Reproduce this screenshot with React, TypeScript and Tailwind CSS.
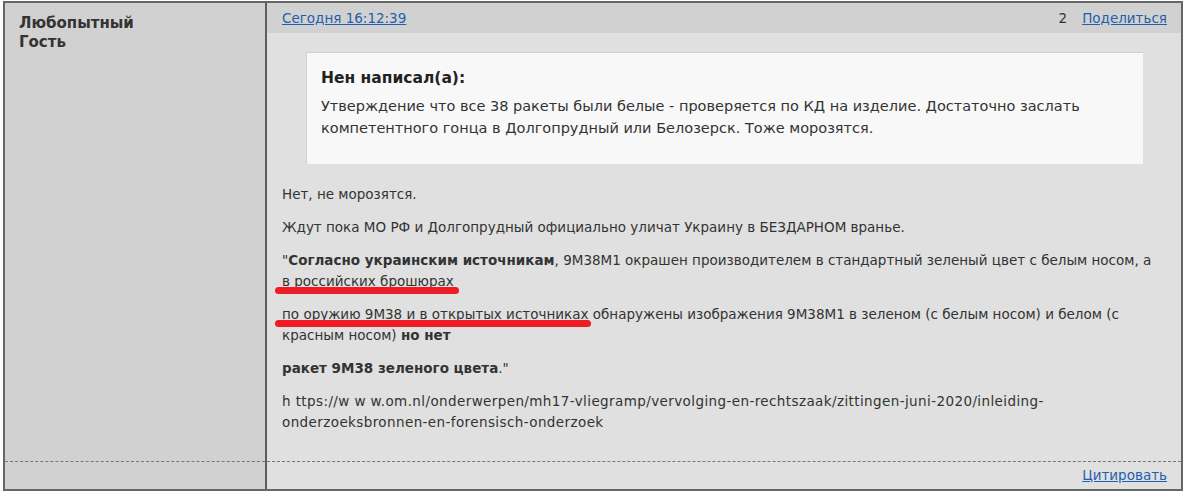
import React from "react";

function Mark({ children, left, right }: { children: React.ReactNode; left: number; right: number }) {
  return (
    <span className="relative whitespace-nowrap">
      {children}
      <span
        className="absolute top-[14px] h-[7px] rounded-full bg-[#ee1c25]"
        style={{ left: -left, right: -right }}
      />
    </span>
  );
}

export default function App() {
  return (
    <div className="ml-[3px] mt-px w-[1180px] h-[490px] border-2 border-[#666666] grid grid-cols-[262px_1fr] grid-rows-[1fr_28px] font-['DejaVu_Sans',Verdana,sans-serif] text-[13.5px] text-[#333333]">
      {/* left column */}
      <div className="bg-[#d1d1d1] border-r-2 border-[#5e5e5e] pl-[14px] pt-[11px]">
        <div className="font-bold text-[15px] leading-[19px] text-[#333333]">Любопытный</div>
        <div className="font-bold text-[15px] leading-[19px] text-[#333333]">Гость</div>
      </div>
      {/* right column */}
      <div className="bg-[#dfe0df] flex flex-col">
        <div className="h-[30px] bg-[#d1d1d1] flex items-center justify-between pl-[15px] pr-[14px]">
          <a href="#" className="text-[#1f5fae] underline">Сегодня 16:12:39</a>
          <div className="flex items-center gap-[15px]">
            <span>2</span>
            <a href="#" className="text-[#1f5fae] underline">Поделиться</a>
          </div>
        </div>
        <div className="pl-[15px] pr-[14px] pt-[19px]">
          <div className="mx-[24px] bg-[#f8f8f8] border-t border-l border-[#cfcfcf] pl-[14px] pr-[14px] pt-[15px] pb-[25px]">
            <div className="font-bold text-[15.5px] leading-[20px] text-[#222222]">Нен написал(а):</div>
            <div className="mt-[7px] text-[14.5px] leading-[22px]">
              Утверждение что все 38 ракеты были белые - проверяется по КД на изделие. Достаточно заслать
              <br />
              компетентного гонца в Долгопрудный или Белозерск. Тоже морозятся.
            </div>
          </div>
          <div className="mt-[20px] leading-[21px] flex flex-col gap-[12px]">
            <p>Нет, не морозятся.</p>
            <p>Ждут пока МО РФ и Долгопрудный официально уличат Украину в БЕЗДАРНОМ вранье.</p>
            <p>
              "<b>Согласно украинским источникам</b>, 9М38М1 окрашен производителем в стандартный зеленый цвет с белым носом, а
              <br />
              <Mark left={7} right={5}>в российских брошюрах</Mark>
            </p>
            <p>
              <Mark left={7} right={3}>по оружию 9М38 и в открытых источниках</Mark> обнаружены изображения 9М38М1 в зеленом (с белым носом) и белом (с
              <br />
              красным носом) <b>но нет</b>
            </p>
            <p>
              <b>ракет 9М38 зеленого цвета</b>."
            </p>
            <p className="tracking-[0.4px]">
              h ttps://w w w.om.nl/onderwerpen/mh17-vliegramp/vervolging-en-rechtszaak/zittingen-juni-2020/inleiding-
              <br />
              onderzoeksbronnen-en-forensisch-onderzoek
            </p>
          </div>
        </div>
      </div>
      {/* footer row */}
      <div className="bg-[#d1d1d1] border-r-2 border-[#5e5e5e]">
        <div className="border-t border-dashed border-[#777777]" />
      </div>
      <div className="bg-[#dfe0df] flex flex-col">
        <div className="border-t border-dashed border-[#777777]" />
        <div className="flex-1 flex items-center justify-end pr-[14px]">
          <a href="#" className="text-[#1f5fae] underline">Цитировать</a>
        </div>
      </div>
    </div>
  );
}
